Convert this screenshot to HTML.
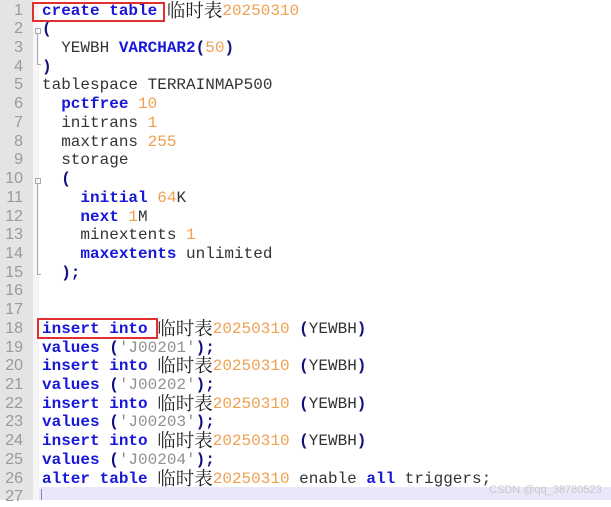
<!DOCTYPE html>
<html><head><meta charset="utf-8"><style>
body{margin:0;width:611px;height:500px;overflow:hidden;background:#fff;position:relative;font-family:"Liberation Mono","Noto Sans CJK SC",monospace;font-size:16px}
#gut{position:absolute;left:0;top:0;width:33px;height:500px;background:#e4e4e4}
#fold{position:absolute;left:33px;top:0;width:6px;height:500px;background:#f6f6f6}
.ln{position:absolute;left:0;width:23px;text-align:right;color:#9a9a9a;font-family:"Liberation Sans",sans-serif;font-size:16px;line-height:18.72px}
.l{position:absolute;left:42px;white-space:pre;line-height:18.72px;height:18.72px;color:#333}
.k{color:#1818d8;font-weight:bold}
.n{color:#f0a050}
.s{color:#909090}
.p{color:#101080;font-weight:bold}
.c{color:#222;font-size:18.5px;font-family:"Noto Serif CJK SC","Noto Sans CJK SC",serif;line-height:0;position:relative;top:2px}
.box{position:absolute;border:2px solid #e03030;box-sizing:border-box}
#cur{position:absolute;left:39px;top:487px;width:572px;height:13px;background:#e8e8fa}
</style></head><body>
<div id="gut"></div><div id="fold"></div>
<div id="cur"></div>
<div style="position:absolute;left:41px;top:489px;width:1px;height:11px;background:#8080c0"></div>
<div style="position:absolute;left:35px;top:28px;width:6px;height:6px;border:1px solid #aaa;box-sizing:border-box"></div>
<div style="position:absolute;left:37px;top:34px;width:1px;height:30px;background:#aaa"></div>
<div style="position:absolute;left:37px;top:64px;width:4px;height:1px;background:#aaa"></div>
<div style="position:absolute;left:35px;top:178px;width:6px;height:6px;border:1px solid #aaa;box-sizing:border-box"></div>
<div style="position:absolute;left:37px;top:184px;width:1px;height:90px;background:#aaa"></div>
<div style="position:absolute;left:37px;top:274px;width:4px;height:1px;background:#aaa"></div>
<div id="lines"></div>
<script>
const L=[
'<span class="k">create table</span> <span class="c">临时表</span><span class="n">20250310</span>',
'<span class="p">(</span>',
'  YEWBH <span class="k">VARCHAR2</span><span class="p">(</span><span class="n">50</span><span class="p">)</span>',
'<span class="p">)</span>',
'tablespace TERRAINMAP500',
'  <span class="k">pctfree</span> <span class="n">10</span>',
'  initrans <span class="n">1</span>',
'  maxtrans <span class="n">255</span>',
'  storage',
'  <span class="p">(</span>',
'    <span class="k">initial</span> <span class="n">64</span>K',
'    <span class="k">next</span> <span class="n">1</span>M',
'    minextents <span class="n">1</span>',
'    <span class="k">maxextents</span> unlimited',
'  <span class="p">);</span>',
'',
'',
'<span class="k">insert into</span> <span class="c">临时表</span><span class="n">20250310</span> <span class="p">(</span>YEWBH<span class="p">)</span>',
'<span class="k">values</span> <span class="p">(</span><span class="s">\'J00201\'</span><span class="p">);</span>',
'<span class="k">insert into</span> <span class="c">临时表</span><span class="n">20250310</span> <span class="p">(</span>YEWBH<span class="p">)</span>',
'<span class="k">values</span> <span class="p">(</span><span class="s">\'J00202\'</span><span class="p">);</span>',
'<span class="k">insert into</span> <span class="c">临时表</span><span class="n">20250310</span> <span class="p">(</span>YEWBH<span class="p">)</span>',
'<span class="k">values</span> <span class="p">(</span><span class="s">\'J00203\'</span><span class="p">);</span>',
'<span class="k">insert into</span> <span class="c">临时表</span><span class="n">20250310</span> <span class="p">(</span>YEWBH<span class="p">)</span>',
'<span class="k">values</span> <span class="p">(</span><span class="s">\'J00204\'</span><span class="p">);</span>',
'<span class="k">alter table</span> <span class="c">临时表</span><span class="n">20250310</span> enable <span class="k">all</span> triggers;',
''];
let h='';
L.forEach((t,i)=>{const y=1.6+i*18.72;h+=`<div class="ln" style="top:${y}px">${i+1}</div><div class="l" style="top:${y}px">${t}</div>`;});
document.getElementById('lines').innerHTML=h;
</script>
<div class="box" style="left:32px;top:2px;width:133px;height:20px"></div>
<div class="box" style="left:37px;top:318px;width:121px;height:21px"></div>
<div style="position:absolute;left:489px;top:484px;font-family:'Liberation Sans',sans-serif;font-size:11px;color:#c8c8c8">CSDN @qq_38780523</div>
</body></html>
